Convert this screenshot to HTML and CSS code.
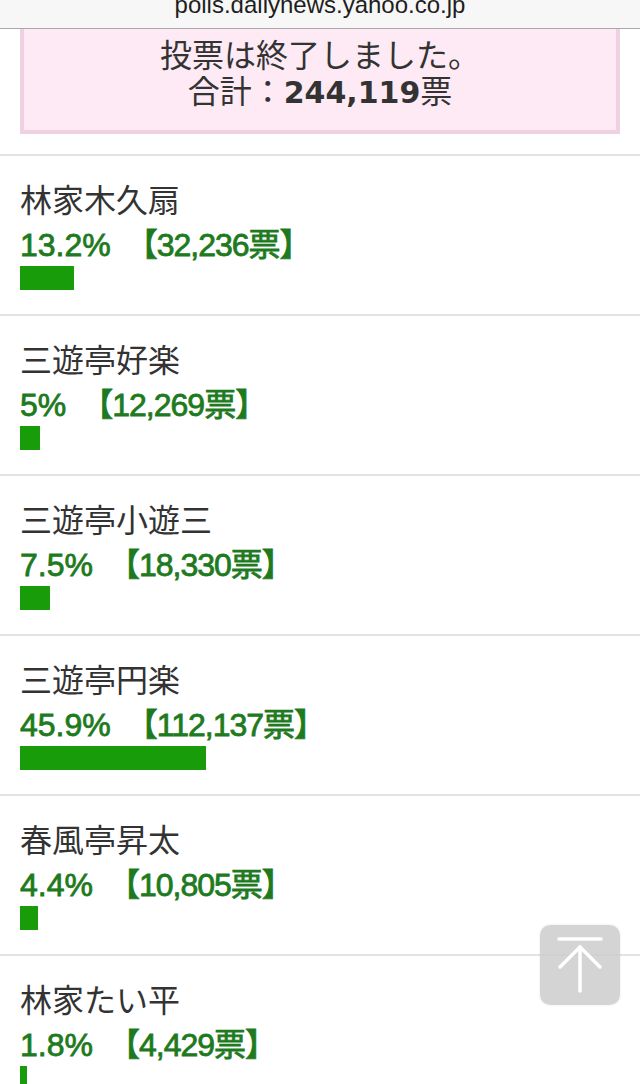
FILE: index.html
```html
<!DOCTYPE html>
<html lang="ja">
<head>
<meta charset="utf-8">
<title>投票結果</title>
<link rel="stylesheet" href="styles.css">
</head>
<body>
<div class="addressbar"><span class="url">polls.dailynews.yahoo.co.jp</span></div>
<div class="wrap">
  <div class="notice">
    <p class="line">投票は終了しました。</p>
    <p class="line">合計：<b class="total">244,119</b>票</p>
  </div>
</div>
<ul class="results">
  <li class="item">
    <div class="name">林家木久扇</div>
    <div class="pct">13.2%<span class="votes">【32,236票】</span></div>
    <div class="bar" style="width:54px"></div>
  </li>
  <li class="item">
    <div class="name">三遊亭好楽</div>
    <div class="pct">5%<span class="votes">【12,269票】</span></div>
    <div class="bar" style="width:20px"></div>
  </li>
  <li class="item">
    <div class="name">三遊亭小遊三</div>
    <div class="pct">7.5%<span class="votes">【18,330票】</span></div>
    <div class="bar" style="width:30px"></div>
  </li>
  <li class="item">
    <div class="name">三遊亭円楽</div>
    <div class="pct">45.9%<span class="votes">【112,137票】</span></div>
    <div class="bar" style="width:186px"></div>
  </li>
  <li class="item">
    <div class="name">春風亭昇太</div>
    <div class="pct">4.4%<span class="votes">【10,805票】</span></div>
    <div class="bar" style="width:18px"></div>
  </li>
  <li class="item">
    <div class="name">林家たい平</div>
    <div class="pct">1.8%<span class="votes">【4,429票】</span></div>
    <div class="bar" style="width:7px"></div>
  </li>
</ul>
<a class="totop" href="#" aria-label="ページトップへ">
  <svg width="80" height="80" viewBox="0 0 80 80">
    <g fill="none" stroke="#fff" stroke-width="3.5" stroke-linecap="round" stroke-linejoin="round">
      <line x1="19" y1="14" x2="61" y2="14"/>
      <line x1="40" y1="22" x2="40" y2="66"/>
      <polyline points="20,42 40,22 60,42"/>
    </g>
  </svg>
</a>
</body>
</html>
```
FILE: styles.css
```css
html, body {
  margin: 0;
  padding: 0;
  background: #fff;
  overflow: hidden;
  height: 1084px;
}
body {
  font-family: "Liberation Sans", "Noto Sans CJK JP", sans-serif;
  color: #333;
}
.addressbar {
  height: 28px;
  background: #f7f7f7;
  border-bottom: 1px solid #a9a9a9;
  overflow: hidden;
  text-align: center;
}
.url {
  display: block;
  margin-top: -7px;
  font-size: 24px;
  line-height: 24px;
  color: #1e1e1e;
}
.wrap {
  padding: 0 20px 20px;
}
.notice {
  background: #fdeaf5;
  border: 4px solid #efd1e2;
  border-top: none;
  padding: 9px 0 20px;
  text-align: center;
}
.line {
  margin: 0;
  font-size: 32px;
  line-height: 36px;
  color: #333;
}
.total {
  font-family: "DejaVu Sans", "Liberation Sans", sans-serif;
  font-weight: bold;
  font-size: 30px;
  line-height: 1;
}
.results {
  list-style: none;
  margin: 0;
  padding: 0;
}
.item {
  border-top: 2px solid #e3e3e3;
  padding: 21px 20px 24px;
}
.name {
  font-size: 32px;
  line-height: 48px;
  color: #333;
}
.pct {
  font-size: 32px;
  line-height: 41px;
  font-weight: normal;
  color: #1e7a1e;
  -webkit-text-stroke: 0.8px #1e7a1e;
  white-space: nowrap;
}
.votes {
  margin-left: 15px;
  letter-spacing: -1px;
}
.bar {
  height: 24px;
  background: #189c09;
}
.totop {
  position: fixed;
  right: 20px;
  top: 925px;
  width: 80px;
  height: 80px;
  border-radius: 10px;
  background: rgba(205, 205, 205, 0.85);
  box-shadow: 0 0 3px rgba(0, 0, 0, 0.08);
  display: block;
}
.totop svg {
  display: block;
}
```
